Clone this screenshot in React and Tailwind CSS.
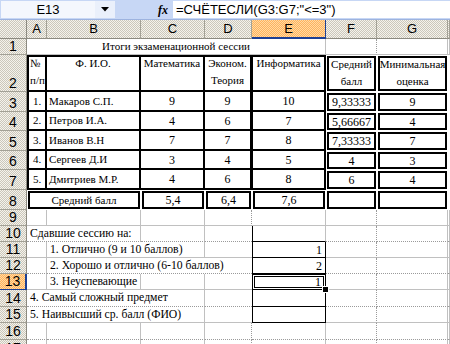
import React from 'react'

const hdr = 'bg-[image:repeating-conic-gradient(#cbc7bb_0_25%,#f5f3ec_0_50%)] bg-[length:2px_2px]'
const sel = 'bg-[image:repeating-conic-gradient(#ffb25c_0_25%,#ffdaa4_0_50%)] bg-[length:2px_2px]'
const sans = "[font-family:'Liberation_Sans',Arial,sans-serif]"
const serif = "[font-family:'Liberation_Serif','Times_New_Roman',serif]"
const dotR = '[border-right-style:dotted] border-r-[#9a9a9a]'
const dotB = '[border-bottom-style:dotted] border-b-[#9a9a9a]'

function FormulaBar() {
  return (
    <div className="flex h-[20px] bg-[#c7d7f5] border-b border-[#9db3df]">
      <div className="w-[94px] shrink-0 ml-px my-px bg-[#f4f7fd] flex items-center justify-center text-[13px] text-black">
        E13
      </div>
      <div className="w-[20px] shrink-0 my-px bg-[#eaf0fb] flex items-center justify-center">
        <svg width="8" height="5" viewBox="0 0 8 5">
          <path d="M0 0H8L4 4.5Z" fill="#000" />
        </svg>
      </div>
      <div className="w-[58px] shrink-0 flex items-center justify-end pr-[5px]">
        <span className="text-[12px] italic font-bold text-black [font-family:'Liberation_Serif',serif]">fx</span>
      </div>
      <div className="flex-1 my-px bg-white flex items-center pl-[3px] text-[13px] text-black whitespace-nowrap">
        =СЧЁТЕСЛИ(G3:G7;"&lt;=3")
      </div>
    </div>
  )
}

function ColH({ w, children, selected, cls = '' }) {
  return (
    <div
      className={`${w} shrink-0 flex items-center justify-center text-[13px] text-black ${
        selected
          ? `${sel} border-r border-r-[#1c3f94] border-b-2 border-b-[#1c3f94]`
          : `${hdr} border-r border-r-[#a3a196] border-b border-b-[#8c8a80]`
      } ${cls}`}
    >
      {children}
    </div>
  )
}

function RowHead({ n, selected }) {
  return (
    <div
      className={`w-[27px] shrink-0 flex items-end justify-center text-[14px] leading-[16px] text-black ${
        selected
          ? `${sel} border-r-2 border-r-[#1c3f94] border-b border-b-[#1c3f94]`
          : `${hdr} border-r border-r-[#8c8a80] border-b border-b-[#a3a196]`
      }`}
    >
      {n}
    </div>
  )
}

function Lines({ items, left }) {
  return (
    <div className={`flex flex-col gap-[5px] whitespace-nowrap ${left ? 'items-start pl-px' : 'items-center'}`}>
      {items.map((t) => (
        <div key={t} className="leading-[12px]">
          {t}
        </div>
      ))}
    </div>
  )
}

function TC({ w, children, left, num, cls = '' }) {
  return (
    <div
      className={`${w} shrink-0 border-r-2 border-b-2 border-black flex items-center ${
        left ? 'justify-start pl-[2px]' : 'justify-center'
      } ${serif} ${num ? 'text-[12px]' : 'text-[11px]'} leading-none whitespace-nowrap text-black ${cls}`}
    >
      {children}
    </div>
  )
}

function Box({ w, children, num }) {
  return (
    <div className={`${w} shrink-0 p-px`}>
      <div
        className={`h-full border-2 border-black flex items-center justify-center ${serif} ${
          num ? 'text-[12px]' : 'text-[11px]'
        } leading-none whitespace-nowrap text-black`}
      >
        {children}
      </div>
    </div>
  )
}

function G({ w, cls = '', big, children }) {
  return (
    <div
      className={`${w} shrink-0 border-r border-b border-[#c0c0c0] flex items-center ${serif} ${
        big ? 'text-[11.7px]' : 'text-[11px]'
      } leading-none whitespace-nowrap text-black ${cls}`}
    >
      {children}
    </div>
  )
}

function EBox({ children, cls = '' }) {
  return (
    <div
      className={`w-[74px] shrink-0 border-x border-b border-black flex items-center justify-end pr-[3px] ${serif} text-[12px] leading-none text-black ${cls}`}
    >
      {children}
    </div>
  )
}

const data = [
  ['1.', 'Макаров С.П.', '9', '9', '10', '9,33333', '9'],
  ['2.', 'Петров И.А.', '4', '6', '7', '5,66667', '4'],
  ['3.', 'Иванов В.Н', '7', '7', '8', '7,33333', '7'],
  ['4.', 'Сергеев Д.И', '3', '4', '5', '4', '3'],
  ['5.', 'Дмитриев М.Р.', '4', '6', '8', '6', '4'],
]
const rowH = ['h-[20px]', 'h-[19px]', 'h-[20px]', 'h-[19px]', 'h-[20px]']

export default function App() {
  return (
    <div className={`w-[450px] h-[344px] overflow-hidden bg-white ${sans}`}>
      <FormulaBar />

      {/* column headers */}
      <div className="flex h-[19px]">
        <div className={`w-[27px] shrink-0 ${hdr} border-r border-b border-[#8c8a80]`} />
        <ColH w="w-[20px]">A</ColH>
        <ColH w="w-[94px]">B</ColH>
        <ColH w="w-[64px]">C</ColH>
        <ColH w="w-[47px]">D</ColH>
        <ColH w="w-[74px]" selected>E</ColH>
        <ColH w="w-[51px]">F</ColH>
        <ColH w="w-[71px]">G</ColH>
        <ColH w="flex-1" />
      </div>

      {/* row 1 */}
      <div className="flex h-[16px]">
        <RowHead n="1" />
        <G w="w-[299px]" cls="justify-center">Итоги экзаменационной сессии</G>
        <G w="w-[51px]" cls={dotR} />
        <G w="w-[71px]" />
        <G w="flex-1" />
      </div>

      {/* row 2 */}
      <div className="flex h-[37px]">
        <RowHead n="2" />
        <div className={`w-[20px] shrink-0 border-2 border-black ${serif} text-[11px] text-black`}>
          <Lines items={['№', 'п/п']} left />
        </div>
        <div className={`w-[94px] shrink-0 border-t-2 border-r-2 border-b-2 border-black ${serif} text-[11px] text-black`}>
          <Lines items={['Ф. И.О.']} />
        </div>
        <div className={`w-[64px] shrink-0 border-t-2 border-r-2 border-b-2 border-black ${serif} text-[11px] text-black`}>
          <Lines items={['Математика']} />
        </div>
        <div className={`w-[47px] shrink-0 border-t-2 border-r-2 border-b-2 border-black ${serif} text-[11px] text-black`}>
          <Lines items={['Эконом.', 'Теория']} />
        </div>
        <div className={`w-[74px] shrink-0 border-t-2 border-r-2 border-b-2 border-l border-black ${serif} text-[11px] text-black`}>
          <Lines items={['Информатика']} />
        </div>
        <div className="w-[51px] shrink-0 p-px">
          <div className={`h-full border-2 border-black ${serif} text-[11px] text-black`}>
            <Lines items={['Средний', 'балл']} />
          </div>
        </div>
        <div className="w-[71px] shrink-0 p-px">
          <div className={`h-full border-2 border-black ${serif} text-[11px] text-black`}>
            <Lines items={['Минимальная', 'оценка']} />
          </div>
        </div>
        <div className="flex-1" />
      </div>

      {/* rows 3-7 */}
      {data.map((r, i) => (
        <div key={i} className={`flex ${rowH[i]}`}>
          <RowHead n={String(i + 3)} />
          <TC w="w-[20px]" cls="border-l-2">{r[0]}</TC>
          <TC w="w-[94px]" left>{r[1]}</TC>
          <TC w="w-[64px]" num>{r[2]}</TC>
          <TC w="w-[47px]" num>{r[3]}</TC>
          <TC w="w-[74px]" num cls="border-l">{r[4]}</TC>
          <Box w="w-[51px]" num>{r[5]}</Box>
          <Box w="w-[71px]" num>{r[6]}</Box>
          <div className="flex-1" />
        </div>
      ))}

      {/* row 8 */}
      <div className="flex h-[20px]">
        <RowHead n="8" />
        <Box w="w-[114px]">Средний балл</Box>
        <Box w="w-[64px]" num>5,4</Box>
        <Box w="w-[47px]" num>6,4</Box>
        <Box w="w-[74px]" num>7,6</Box>
        <Box w="w-[51px]" />
        <Box w="w-[71px]" />
        <div className="flex-1" />
      </div>

      {/* row 9 */}
      <div className="flex h-[16px]">
        <RowHead n="9" />
        <G w="w-[20px]" />
        <G w="w-[94px]" />
        <G w="w-[64px]" />
        <G w="w-[47px]" cls={dotR} />
        <G w="w-[74px]" />
        <G w="w-[51px]" cls={dotR} />
        <G w="w-[71px]" />
        <G w="flex-1" />
      </div>

      {/* row 10 */}
      <div className="flex h-[16px]">
        <RowHead n="10" />
        <G w="w-[114px]" big cls={`pl-[3px] ${dotB}`}>Сдавшие сессию на:</G>
        <G w="w-[64px]" cls={dotB} />
        <G w="w-[47px]" cls={`${dotB} border-r-0`} />
        <div className="w-[74px] shrink-0 border-l border-b border-r border-black border-r-[#c0c0c0]" />
        <G w="w-[51px]" cls={`${dotR} ${dotB}`} />
        <G w="w-[71px]" cls={dotB} />
        <G w="flex-1" cls={dotB} />
      </div>

      {/* row 11 */}
      <div className="flex h-[16px]">
        <RowHead n="11" />
        <G w="w-[20px]" />
        <G w="w-[158px]" big cls="pl-[3px]">1. Отлично (9 и 10 баллов)</G>
        <G w="w-[47px]" cls="border-r-0" />
        <EBox>1</EBox>
        <G w="w-[51px]" cls={dotR} />
        <G w="w-[71px]" />
        <G w="flex-1" />
      </div>

      {/* row 12 */}
      <div className="flex h-[16px]">
        <RowHead n="12" />
        <G w="w-[20px]" cls={dotB} />
        <G w="w-[205px]" big cls={`pl-[3px] border-r-0 ${dotB}`}>2. Хорошо и отлично (6-10 баллов)</G>
        <EBox>2</EBox>
        <G w="w-[51px]" cls={`${dotR} ${dotB}`} />
        <G w="w-[71px]" cls={dotB} />
        <G w="flex-1" cls={dotB} />
      </div>

      {/* row 13 */}
      <div className="flex h-[16px]">
        <RowHead n="13" selected />
        <G w="w-[20px]" />
        <G w="w-[94px]" big cls="pl-[3px]">3. Неуспевающие</G>
        <G w="w-[64px]" />
        <G w="w-[47px]" cls="border-r-0" />
        <div className="relative w-[74px] shrink-0 border border-black p-px">
          <div className={`h-full border border-black flex items-center justify-end pr-[2px] ${serif} text-[12px] leading-none text-black`}>
            1
          </div>
          <div className="absolute -right-[4px] -bottom-[4px] w-[7px] h-[7px] bg-black border border-white" />
        </div>
        <G w="w-[51px]" cls={dotR} />
        <G w="w-[71px]" />
        <G w="flex-1" />
      </div>

      {/* row 14 */}
      <div className="flex h-[17px]">
        <RowHead n="14" />
        <G w="w-[178px]" big cls={`pl-[3px] ${dotB}`}>4. Самый сложный предмет</G>
        <G w="w-[47px]" cls={`border-r-0 ${dotB}`} />
        <EBox />
        <G w="w-[51px]" cls={`${dotR} ${dotB}`} />
        <G w="w-[71px]" cls={dotB} />
        <G w="flex-1" cls={dotB} />
      </div>

      {/* row 15 */}
      <div className="flex h-[16px]">
        <RowHead n="15" />
        <G w="w-[178px]" big cls="pl-[3px]">5. Наивысший ср. балл (ФИО)</G>
        <G w="w-[47px]" cls="border-r-0" />
        <EBox />
        <G w="w-[51px]" cls={dotR} />
        <G w="w-[71px]" />
        <G w="flex-1" />
      </div>

      {/* rows 16-17 */}
      {['16', '17'].map((n) => (
        <div key={n} className="flex h-[17px]">
          <RowHead n={n} />
          <G w="w-[20px]" cls={n === '16' ? dotB : ''} />
          <G w="w-[94px]" cls={n === '16' ? dotB : ''} />
          <G w="w-[64px]" cls={n === '16' ? dotB : ''} />
          <G w="w-[47px]" cls={`${dotR} ${n === '16' ? dotB : ''}`} />
          <G w="w-[74px]" cls={n === '16' ? dotB : ''} />
          <G w="w-[51px]" cls={`${dotR} ${n === '16' ? dotB : ''}`} />
          <G w="w-[71px]" cls={n === '16' ? dotB : ''} />
          <G w="flex-1" cls={n === '16' ? dotB : ''} />
        </div>
      ))}
    </div>
  )
}
